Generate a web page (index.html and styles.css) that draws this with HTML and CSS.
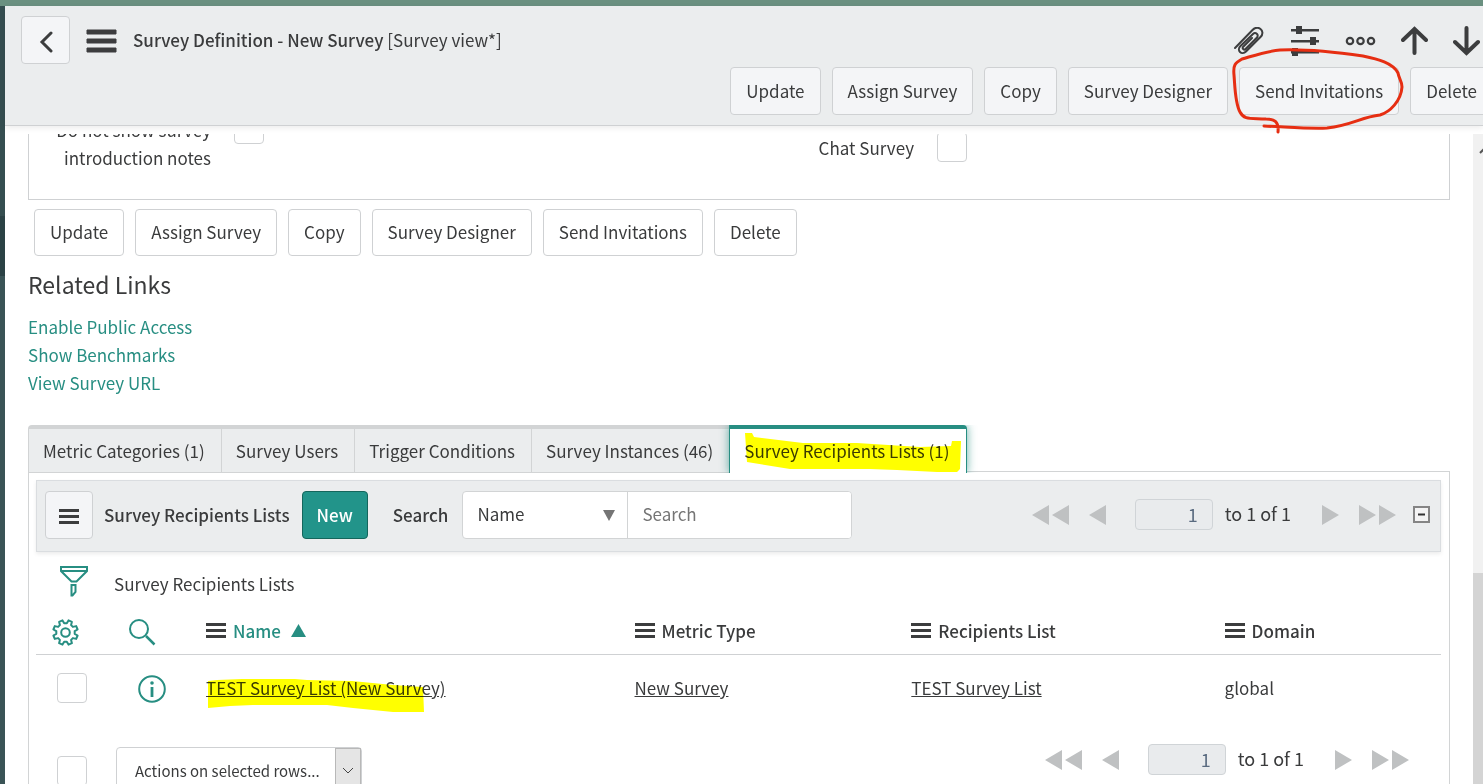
FILE: index.html
```html
<!DOCTYPE html>
<html lang="en">
  <head>
    <meta charset="UTF-8" />
    <title>Survey Definition - New Survey</title>
    <link rel="stylesheet" href="styles.css">
  </head>

  <body>
    <!-- shared icons -->
    <svg class="defs">
      <symbol id="bars" viewBox="0 0 20 16">
        <path d="M0 0h20v3H0zM0 6h20v3H0zM0 12h20v3H0z" fill="#3c3d3e" />
      </symbol>
      <symbol id="prev" viewBox="0 0 17 20"><path d="M17 0v20L0 10z" fill="currentColor" /></symbol>
      <symbol id="next" viewBox="0 0 17 20"><path d="M0 0v20l17-10z" fill="currentColor" /></symbol>
      <symbol id="first" viewBox="0 0 37 20"><path d="M17 0v20L0 10zM37 0v20L20 10z" fill="currentColor" /></symbol>
      <symbol id="last" viewBox="0 0 37 20"><path d="M0 0v20l17-10zM20 0v20l17-10z" fill="currentColor" /></symbol>
    </svg>

    <div class="topbar"></div>
    <div class="page">
      <aside class="nav-edge"></aside>

      <main class="frame">
        <header class="header">
          <div class="header-row">
            <button class="btn btn-back" aria-label="Back">
              <svg width="14" height="22" viewBox="0 0 14 22"><path d="M12 2L3 11l9 9" fill="none" stroke="#3c3d3e" stroke-width="3" stroke-linecap="round" /></svg>
            </button>
            <button class="icon-btn" aria-label="Menu">
              <svg width="31" height="24" viewBox="0 0 31 24"><path d="M1 1h29v4H1zM1 10h29v4H1zM1 19h29v4H1z" fill="#3c3d3e" stroke="#3c3d3e" stroke-linejoin="round" /></svg>
            </button>
            <h1 class="title"><b>Survey Definition - New Survey</b> [Survey view*]</h1>
            <div class="header-icons">
              <button class="icon-btn" aria-label="Attachments">
                <svg width="31" height="28" viewBox="0 0 31 28" fill="none" stroke="#3c3d3e" stroke-width="2" stroke-linecap="round" stroke-linejoin="round">
                  <path d="M1 21L18.500 3c3-3 6-2.500 8-1s3 5 0 8L12 24.500c-2 2-4.500 2-6 .500s-1.500-4 .500-6L19 7c1.500-1.500 3-1 4 0s1 2.500-.500 4L11.500 22c-.800.800-1.800.500-2.300 0s-.700-1.500 0-2.300L18 11" />
                </svg>
              </button>
              <button class="icon-btn" aria-label="Personalize form">
                <svg width="30" height="30" viewBox="0 0 30 30" fill="#3c3d3e">
                  <path d="M1 3h28v2.500H1zM1 14h28v2.500H1zM1 25h28v2.500H1z" /><path d="M6 0h6v8H6zM20 11h6v8h-6zM2 22h6v8H2z" />
                </svg>
              </button>
              <button class="icon-btn" aria-label="More options">
                <svg width="31" height="10" viewBox="0 0 31 10" fill="none" stroke="#3c3d3e" stroke-width="2.200"><circle cx="5" cy="5" r="3.200" /><circle cx="15.500" cy="5" r="3.200" /><circle cx="26" cy="5" r="3.200" /></svg>
              </button>
              <button class="icon-btn" aria-label="Previous record">
                <svg width="27" height="30" viewBox="0 0 27 30" fill="none" stroke="#3c3d3e" stroke-width="4" stroke-linecap="round"><path d="M13.500 27V4M2 14L13.500 3 25 14" /></svg>
              </button>
              <button class="icon-btn" aria-label="Next record">
                <svg width="27" height="30" viewBox="0 0 27 30" fill="none" stroke="#3c3d3e" stroke-width="4" stroke-linecap="round"><path d="M13.500 2v23M2 16l11.500 11L25 16" /></svg>
              </button>
            </div>
          </div>
          <div class="header-actions">
            <button class="btn">Update</button>
            <button class="btn">Assign Survey</button>
            <button class="btn">Copy</button>
            <button class="btn">Survey Designer</button>
            <div class="marked">
              <button class="btn">Send Invitations</button>
              <svg class="red-ring" width="180" height="92" viewBox="0 0 180 92">
                <path d="M34 81C58 82 80 84 97 83c26-3 34-11 53-13 10-3 21-14 22-28 0-6-3-8-4-14C163 18 148 14 133 11 105 7 75 4 50 5 38 6 26 10 12 14 5 18 3 20 4 30c1 12 1 28 6 37 4 8 10 6 26 7 8 0 13 2 12 13" fill="none" stroke="#e62e12" stroke-width="3" stroke-linecap="round" stroke-linejoin="round" />
              </svg>
            </div>
            <button class="btn">Delete</button>
          </div>
        </header>

        <div class="body-row">
          <div class="content">
            <section class="form-section">
              <div class="field">
                <label for="no-notes">Do not show survey introduction notes</label>
                <input type="checkbox" class="check" id="no-notes" />
              </div>
              <div class="field field-chat">
                <label for="chat-survey">Chat Survey</label>
                <input type="checkbox" class="check" id="chat-survey" />
              </div>
            </section>

            <div class="form-actions">
              <button class="btn">Update</button>
              <button class="btn">Assign Survey</button>
              <button class="btn">Copy</button>
              <button class="btn">Survey Designer</button>
              <button class="btn">Send Invitations</button>
              <button class="btn">Delete</button>
            </div>

            <h2 class="related-title">Related Links</h2>
            <ul class="related-links">
              <li><a href="#">Enable Public Access</a></li>
              <li><a href="#">Show Benchmarks</a></li>
              <li><a href="#">View Survey URL</a></li>
            </ul>

            <div class="tabs" role="tablist">
              <button class="tab" role="tab">Metric Categories (1)</button>
              <button class="tab" role="tab">Survey Users</button>
              <button class="tab" role="tab">Trigger Conditions</button>
              <button class="tab" role="tab">Survey Instances (46)</button>
              <button class="tab active" role="tab" aria-selected="true">Survey Recipients Lists (1)
                <svg class="marker marker-tab" width="218" height="42" viewBox="0 0 218 42">
                  <path d="M1 1h7l2 4 49 6h54l63 4 31-1 1-5h9l-1 28-3 3h-20l-40-2-27-1H46L3 30z" fill="#ff0" />
                </svg>
              </button>
            </div>

            <section class="list-panel">
              <div class="toolbar">
                <button class="btn btn-menu" aria-label="List menu"><svg width="20" height="16"><use href="#bars" /></svg></button>
                <h3 class="list-title">Survey Recipients Lists</h3>
                <button class="btn btn-new">New</button>
                <label class="search-label" for="search-field">Search</label>
                <div class="search-group">
                  <div class="select-wrap">
                    <select id="search-field"><option>Name</option></select>
                    <svg class="caret" width="12" height="11" viewBox="0 0 12 11"><path d="M0 0h12L6 11z" fill="#757575" /></svg>
                  </div>
                  <input type="text" placeholder="Search" aria-label="Search text" />
                </div>
                <div class="pager">
                  <button class="icon-btn" aria-label="First page"><svg width="37" height="20"><use href="#first" /></svg></button>
                  <button class="icon-btn" aria-label="Previous page"><svg width="17" height="20"><use href="#prev" /></svg></button>
                  <input type="text" class="page-no" value="1" aria-label="Row" />
                  <span class="page-text">to 1 of 1</span>
                  <button class="icon-btn" aria-label="Next page"><svg width="17" height="20"><use href="#next" /></svg></button>
                  <button class="icon-btn" aria-label="Last page"><svg width="37" height="20"><use href="#last" /></svg></button>
                </div>
                <button class="icon-btn" aria-label="Collapse list">
                  <svg width="17" height="17" viewBox="0 0 17 17"><rect x="1" y="1" width="15" height="15" fill="#f4f4f4" stroke="#858585" stroke-width="2" /><path d="M5 8.500h7" stroke="#333" stroke-width="2" /></svg>
                </button>
              </div>

              <div class="breadcrumb">
                <button class="icon-btn" aria-label="Filter">
                  <svg width="28" height="31" viewBox="0 0 28 31" fill="none" stroke="#278e82" stroke-width="2"><path d="M1 1h26v4L16.500 15.500h-5L1 5zM1 5h26M11.500 19h4v7l-3 3.500h-1z" /></svg>
                </button>
                <span>Survey Recipients Lists</span>
              </div>

              <table class="list">
                <colgroup>
                  <col class="col-check" /><col class="col-info" /><col class="col-name" /><col class="col-metric" /><col class="col-recipients" /><col />
                </colgroup>
                <thead>
                  <tr>
                    <th class="cell-gear">
                      <button class="icon-btn" aria-label="Personalize list">
                        <svg width="27" height="27" viewBox="-13.5 -13.5 27 27" fill="none" stroke="#278e82" stroke-width="2" stroke-linejoin="round">
                          <path d="M1.300-9.200L3-12.100 6.400-10.700 5.600-7.400 7.400-5.600 10.700-6.400 12.100-3 9.200-1.300V1.300L12.100 3 10.700 6.400 7.400 5.600 5.600 7.400 6.400 10.700 3 12.100 1.300 9.200H-1.300L-3 12.100-6.400 10.700-5.600 7.400-7.400 5.600-10.700 6.400-12.100 3-9.200 1.300V-1.300L-12.100-3-10.700-6.400-7.400-5.600-5.600-7.400-6.400-10.700-3-12.100-1.300-9.200z" /><circle r="4.300" />
                        </svg>
                      </button>
                    </th>
                    <th class="cell-search">
                      <button class="icon-btn" aria-label="Search columns">
                        <svg width="27" height="27" viewBox="0 0 27 27" fill="none" stroke="#278e82" stroke-width="2"><circle cx="10" cy="10" r="9" /><path d="M17 17l8.500 8.500" stroke-width="2.500" /></svg>
                      </button>
                    </th>
                    <th class="sorted"><span class="th"><svg width="20" height="16"><use href="#bars" /></svg>Name <svg class="sort" width="15" height="13" viewBox="0 0 15 13"><path d="M0 13h15L7.500 0z" fill="#278e82" /></svg></span></th>
                    <th><span class="th"><svg width="20" height="16"><use href="#bars" /></svg>Metric Type</span></th>
                    <th><span class="th"><svg width="20" height="16"><use href="#bars" /></svg>Recipients List</span></th>
                    <th><span class="th"><svg width="20" height="16"><use href="#bars" /></svg>Domain</span></th>
                  </tr>
                </thead>
                <tbody>
                  <tr>
                    <td class="cell-check"><input type="checkbox" class="check" aria-label="Select row" /></td>
                    <td class="cell-info">
                      <button class="icon-btn" aria-label="Preview record">
                        <svg width="28" height="28" viewBox="0 0 28 28"><circle cx="14" cy="14" r="12.800" fill="none" stroke="#278e82" stroke-width="2" /><circle cx="14" cy="8" r="1.800" fill="#278e82" /><path d="M14 12v10" stroke="#278e82" stroke-width="2.800" /></svg>
                      </button>
                    </td>
                    <td>
                      <a href="#" class="marked">TEST Survey List (New Survey)
                        <svg class="marker marker-row" width="218" height="34" viewBox="0 0 218 34">
                          <path d="M1 3l9-1 25-1h53l12 1 45 1 41 4 30 2 1 25h-31l-40-4-26-3H46l-23 1-22 2z" fill="#ff0" />
                        </svg>
                      </a>
                    </td>
                    <td><a href="#">New Survey</a></td>
                    <td><a href="#">TEST Survey List</a></td>
                    <td>global</td>
                  </tr>
                </tbody>
              </table>

              <div class="list-footer">
                <input type="checkbox" class="check" aria-label="Select all rows" />
                <div class="select-wrap actions-select">
                  <select aria-label="Actions"><option>Actions on selected rows...</option></select>
                  <span class="drop"><svg width="12" height="8" viewBox="0 0 12 8"><path d="M1 1l5 5 5-5" fill="none" stroke="#444" /></svg></span>
                </div>
                <div class="pager">
                  <button class="icon-btn" aria-label="First page"><svg width="37" height="20"><use href="#first" /></svg></button>
                  <button class="icon-btn" aria-label="Previous page"><svg width="17" height="20"><use href="#prev" /></svg></button>
                  <input type="text" class="page-no" value="1" aria-label="Row" />
                  <span class="page-text">to 1 of 1</span>
                  <button class="icon-btn" aria-label="Next page"><svg width="17" height="20"><use href="#next" /></svg></button>
                  <button class="icon-btn" aria-label="Last page"><svg width="37" height="20"><use href="#last" /></svg></button>
                </div>
              </div>
            </section>
          </div>

          <div class="scrollbar">
            <svg width="10" height="8" viewBox="0 0 10 8"><path d="M7 7l5-5" stroke="#555" stroke-width="2" /></svg>
            <div class="thumb"></div>
          </div>
        </div>
      </main>
    </div>
  </body>
</html>
```
FILE: styles.css
```css
* {
  box-sizing: border-box;
}

body {
  display: flex;
  flex-direction: column;
  height: 100vh;
  margin: 0;
  overflow: hidden;
  background-color: #fff;
  color: #3a3b3c;
  font-family: "Noto Sans CJK SC", "Open Sans", sans-serif;
  font-size: 17px;
  line-height: 28px;
}

button,
input,
select {
  font: inherit;
  color: inherit;
}

svg {
  display: block;
  flex-shrink: 0;
}

h1,
h2,
h3,
ul {
  margin: 0;
  padding: 0;
}

b,
h3,
th {
  font-weight: 500;
}

.defs {
  display: none;
}

.topbar {
  flex: 0 0 6px;
  background-color: #6a9080;
}

.page {
  display: flex;
  flex: 1;
  min-height: 0;
}

.nav-edge {
  flex: 0 0 5px;
  background: linear-gradient(#354e50 210px, #2b4245 210px, #2b4245 270px, #3a5456 270px);
}

.frame {
  display: flex;
  flex: 1;
  flex-direction: column;
  min-width: 0;
}

/* buttons */
.btn {
  height: 47px;
  padding: 0 15px 1px;
  border: 1px solid #cfd1d3;
  border-radius: 4px;
  background-color: #fff;
  white-space: nowrap;
  cursor: pointer;
}

.icon-btn {
  padding: 0;
  border: none;
  background: none;
  vertical-align: middle;
  cursor: pointer;
}

.btn-back,
.btn-menu {
  display: flex;
  align-items: center;
  justify-content: center;
  width: 49px;
  height: 48px;
  padding: 4px 0 0;
}

.btn-menu {
  width: 48px;
}

.header .btn,
.btn-menu {
  height: 48px;
  background-color: #f4f5f7;
}

.header-actions .btn {
  padding-bottom: 0;
}

.btn-new {
  height: 48px;
  padding: 0 14px;
  border-color: #14665c;
  background-color: #22948a;
  color: #fff;
  font-weight: 500;
}

.check {
  flex: none;
  display: block;
  appearance: none;
  width: 30px;
  height: 30px;
  margin: 0;
  border: 1px solid #cfd1d3;
  border-radius: 4px;
  background-color: #fff;
}

/* header */
.header {
  position: relative;
  z-index: 2;
  height: 120px;
  padding: 10px 0 0 16px;
  border-bottom: 1px solid #cfd1d3;
  background-color: #ebedee;
  box-shadow: 0 2px 6px rgba(0, 0, 0, 0.08);
}

.header-row {
  display: flex;
  align-items: center;
  gap: 16px;
  padding-right: 3px;
}

.header-row > .icon-btn {
  padding-top: 2px;
}

.title {
  padding-bottom: 1px;
  font-size: 17px;
  font-weight: 400;
}

.header-icons {
  display: flex;
  align-items: center;
  gap: 25px;
  margin-left: auto;
  padding-top: 1px;
}

/* the last button runs past the window edge */
.header-actions {
  display: flex;
  justify-content: flex-end;
  gap: 11px;
  margin: 3px -10px 0 0;
}

.marked {
  position: relative;
}

.red-ring {
  position: absolute;
  top: -22px;
  left: -9px;
  pointer-events: none;
}

.marker {
  position: absolute;
  mix-blend-mode: multiply;
  pointer-events: none;
}

.marker-tab {
  top: 3px;
  left: 14px;
}

.marker-row {
  top: 3px;
  left: 1px;
}

/* content */
.body-row {
  display: flex;
  flex: 1;
  min-height: 0;
  margin-top: 8px;
}

.content {
  flex: 1;
  min-width: 0;
  padding: 0 23px;
  overflow: hidden;
}

.form-section {
  display: grid;
  grid-template-columns: 1fr 1fr;
  margin-top: -20px;
  padding-bottom: 27px;
  border: 1px solid #cfd1d3;
  border-top: none;
}

.field {
  display: flex;
  align-items: flex-start;
  gap: 23px;
}

.field label {
  width: 182px;
  padding-top: 2px;
  text-align: right;
}

.field-chat {
  padding-top: 18px;
}

.field-chat label {
  width: 175px;
}

.form-actions {
  display: flex;
  gap: 11px;
  margin: 9px 6px 0;
}

.related-title {
  margin: 14px 0 15px;
  font-size: 23px;
  font-weight: 400;
}

.related-links {
  list-style: none;
}

.related-links a {
  color: #278e82;
  text-decoration: none;
}

.tabs {
  display: flex;
  margin-top: 28px;
}

.tab {
  height: 48px;
  padding: 0 16px 0 14px;
  border: solid #d2d4d5;
  border-width: 4px 0 1px 1px;
  background-color: #ebedee;
  white-space: nowrap;
}

.tab:first-child {
  border-top-left-radius: 4px;
}

.tab.active {
  position: relative;
  padding-bottom: 1px;
  border: solid #278e82;
  border-width: 4px 1px 0;
  border-radius: 0 4px 0 0;
  background-color: #fff;
  box-shadow: 0 0 10px rgba(39, 142, 130, 0.7);
  clip-path: inset(0 -12px 0 -12px);
}

.list-panel {
  min-height: 400px;
  margin-top: -2px;
  padding: 8px 8px 0 7px;
  border: 1px solid #d2d4d5;
}

.toolbar {
  display: flex;
  align-items: center;
  height: 72px;
  padding: 0 10px 3px 8px;
  border: 1px solid #dadde0;
  background-color: #ebedee;
  box-shadow: 0 2px 4px rgba(0, 0, 0, 0.08);
}

.list-title {
  margin: 0 12px 0 11px;
  font-size: 17px;
}

.search-label {
  margin: 0 14px 0 25px;
  font-weight: 500;
}

.search-group {
  display: flex;
  flex: 0 1 390px;
  height: 48px;
  border: 1px solid #d2d4d5;
  border-radius: 4px;
  background-color: #fff;
  overflow: hidden;
}

.select-wrap {
  position: relative;
}

.search-group .select-wrap {
  flex: 0 0 165px;
  border-right: 1px solid #d2d4d5;
}

.search-group input {
  flex: 1;
  min-width: 0;
  padding: 0 14px 2px;
  border: none;
}

.search-group input::placeholder {
  color: #757575;
}

select {
  appearance: none;
  width: 100%;
  height: 100%;
  padding: 0 14px 2px;
  border: none;
  background: none;
}

.caret {
  position: absolute;
  top: 18px;
  right: 12px;
  pointer-events: none;
}

.pager {
  display: flex;
  align-items: center;
  margin-left: auto;
  color: #bfc1c2;
  font-size: 18px;
}

.pager .icon-btn + .icon-btn {
  margin-left: 20px;
}

.page-no {
  width: 78px;
  height: 31px;
  margin: 0 12px 0 29px;
  padding: 0 14px 2px;
  border: 1px solid #d0d4d7;
  border-radius: 4px;
  background-color: #e9ebed;
  color: #5a6b80;
  text-align: right;
}

.page-text {
  margin-right: 31px;
  padding-bottom: 3px;
  color: #3a3b3c;
}

.toolbar > .icon-btn {
  margin-left: 17px;
}

.breadcrumb {
  display: flex;
  align-items: center;
  gap: 26px;
  height: 59px;
  padding: 0 24px;
}

.breadcrumb span {
  padding-top: 4px;
}

/* list */
.list {
  width: 100%;
  border-collapse: collapse;
  table-layout: fixed;
}

.col-check {
  width: 80px;
}

.col-info {
  width: 90px;
}

.col-name {
  width: 30.5%;
}

.col-metric {
  width: 19.7%;
}

.col-recipients {
  width: 22.3%;
}

.list th {
  height: 43px;
  padding: 0 0 3px;
  border-bottom: 1px solid #cfd1d3;
  text-align: left;
}

.list td {
  height: 68px;
  padding: 0;
}

.list td a {
  color: inherit;
}

.th {
  display: flex;
  align-items: center;
  gap: 7px;
}

.sort {
  margin-left: 3px;
}

.sorted {
  color: #278e82;
}

.list .cell-gear {
  padding-left: 16px;
}

.list .cell-search {
  padding-left: 13px;
}

.list .cell-check {
  padding-left: 21px;
}

.list .cell-info {
  padding-left: 22px;
}

.list-footer {
  display: flex;
  align-items: flex-start;
  padding: 22px 32px 0 21px;
}

.list-footer .check {
  margin-top: 12px;
}

.actions-select {
  width: 246px;
  height: 48px;
  margin: 3px 0 0 29px;
  border: 1px solid #cfd1d3;
  border-radius: 4px;
  font-size: 15px;
}

.actions-select select {
  padding: 0 18px;
}

.drop {
  position: absolute;
  top: 0;
  right: 0;
  display: flex;
  align-items: center;
  justify-content: center;
  width: 26px;
  height: 46px;
  border: 1px solid #b8b8b8;
  background-color: #e5e5e5;
  pointer-events: none;
}

.scrollbar {
  display: flex;
  flex: 0 0 10px;
  flex-direction: column;
  justify-content: space-between;
  padding-top: 12px;
  background-color: #f1f1f1;
}

.thumb {
  height: 33%;
  background-color: #d4d4d4;
}
```
